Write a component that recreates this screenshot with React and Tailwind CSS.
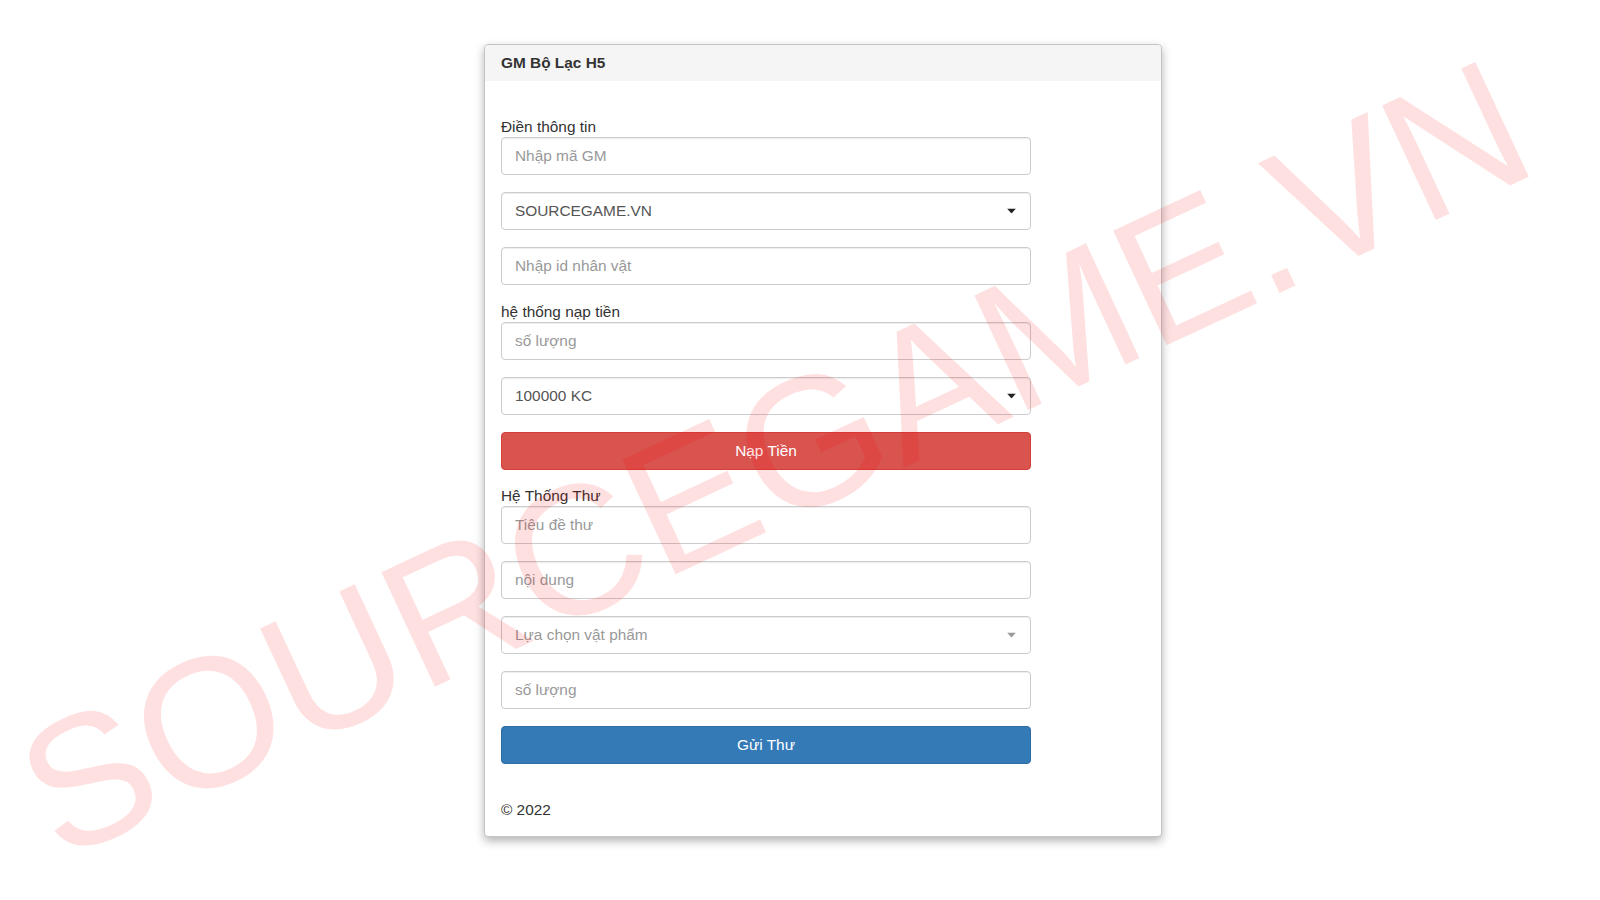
import React from 'react';

const FONT = { fontFamily: '"Liberation Sans", Arial, sans-serif' };

const fieldClass =
  'block w-[530px] h-[38px] rounded-[4px] border border-[#ccc] bg-white px-[13px] text-[15.4px] text-[#555] shadow-[inset_0_1px_1px_rgba(0,0,0,0.075)] outline-none placeholder:text-[#999]';

function Label({ children }) {
  return <div className="h-[20px] leading-[20px] text-[15.4px] text-[#333]">{children}</div>;
}

function Field({ placeholder }) {
  return <input type="text" placeholder={placeholder} className={fieldClass} />;
}

function Select({ options, muted }) {
  return (
    <div className="relative w-[530px]">
      <select
        defaultValue={options[0]}
        className={`${fieldClass} appearance-none ${muted ? 'text-[#999]' : 'text-[#444]'}`}
      >
        {options.map((o) => (
          <option key={o}>{o}</option>
        ))}
      </select>
      {/* native-looking dropdown caret */}
      <svg
        className="pointer-events-none absolute right-[15px] top-1/2 -translate-y-1/2"
        width="9"
        height="5"
        viewBox="0 0 9 5"
      >
        <polygon points="0,0 9,0 4.5,5" fill={muted ? '#999' : '#222'} />
      </svg>
    </div>
  );
}

function Button({ color, children }) {
  const colors =
    color === 'red'
      ? 'bg-[#d9534f] border-[#d43f3a]'
      : 'bg-[#337ab7] border-[#2e6da4]';
  return (
    <button
      type="button"
      className={`block w-[530px] h-[38px] rounded-[4px] border text-[15.4px] leading-[36px] text-white ${colors}`}
    >
      {children}
    </button>
  );
}

export default function App() {
  return (
    <div className="relative h-[900px] w-full overflow-hidden bg-white" style={FONT}>
      <div className="ml-[484px] mt-[44px] w-[678px] rounded-[4px] border border-[#c4c4c4] bg-white shadow-[0_4px_10px_rgba(0,0,0,0.3)]">
        <div className="flex h-[36px] items-center rounded-t-[4px] bg-[#f5f5f5] px-[16px] text-[15.4px] font-bold text-[#333]">
          GM Bộ Lạc H5
        </div>

        <div className="px-[16px] pt-[36px] pb-[15px]">
          <div className="flex flex-col">
            <Label>Điền thông tin</Label>
            <Field placeholder="Nhập mã GM" />
            <div className="h-[17px]" />
            <Select options={['SOURCEGAME.VN']} />
            <div className="h-[17px]" />
            <Field placeholder="Nhập id nhân vật" />
            <div className="h-[17px]" />

            <Label>hệ thống nạp tiền</Label>
            <Field placeholder="số lượng" />
            <div className="h-[17px]" />
            <Select options={['100000 KC', '50000 KC', '10000 KC']} />
            <div className="h-[17px]" />
            <Button color="red">Nạp Tiền</Button>
            <div className="h-[16px]" />

            <Label>Hệ Thống Thư</Label>
            <Field placeholder="Tiêu đề thư" />
            <div className="h-[17px]" />
            <Field placeholder="nội dung" />
            <div className="h-[17px]" />
            <Select options={['Lựa chọn vật phẩm']} muted />
            <div className="h-[17px]" />
            <Field placeholder="số lượng" />
            <div className="h-[17px]" />
            <Button color="blue">Gửi Thư</Button>
          </div>

          <div className="mt-[35px] h-[22px] leading-[22px] text-[15.4px] text-[#333]">© 2022</div>
        </div>
      </div>

      {/* watermark laid over the page */}
      <div className="pointer-events-none absolute left-[774px] top-[458px] -translate-x-1/2 -translate-y-1/2 -rotate-[25deg] whitespace-nowrap text-[184px] leading-none text-[rgba(255,0,0,0.12)]">
        SOURCEGAME.VN
      </div>
    </div>
  );
}
